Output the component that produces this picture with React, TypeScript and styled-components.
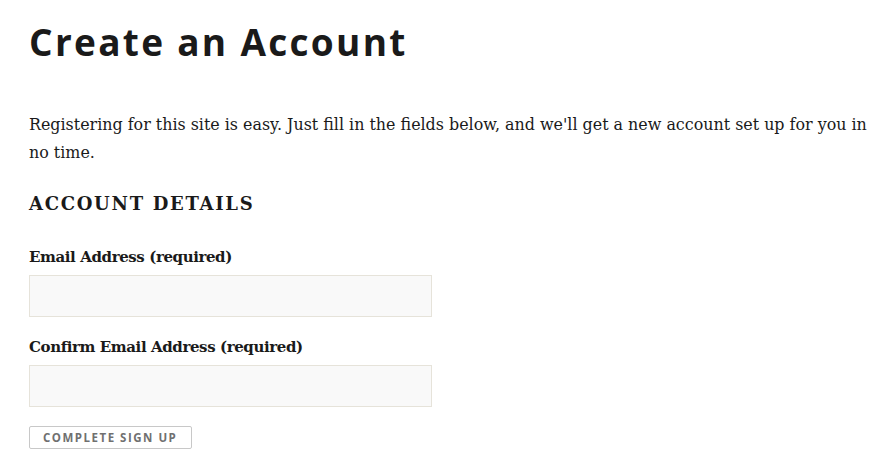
import React from 'react';
import styled, {createGlobalStyle} from 'styled-components';

const GlobalStyle = createGlobalStyle`
    body {
        margin: 0;
        background: #fff;
        color: #1a1a1a;
        font-family: "DejaVu Serif", "Liberation Serif", serif;
    }
`;

const Page = styled.main`
    padding: 20px 16px 0 29px;
`;

const Title = styled.h1`
    margin: 0;
    font-family: "Open Sans", "Liberation Sans", sans-serif;
    font-weight: 700;
    font-size: 37px;
    line-height: 44px;
    letter-spacing: 2.3px;
    color: #1a1a1a;
`;

const Intro = styled.p`
    margin: 47px 0 0;
    font-size: 15.9px;
    line-height: 28px;
    color: #1a1a1a;
`;

const SectionTitle = styled.h2`
    margin: 24px 0 0;
    font-size: 18px;
    line-height: 26px;
    font-weight: 700;
    letter-spacing: 1.7px;
    text-transform: uppercase;
`;

const Field = styled.div`
    display: flex;
    flex-direction: column;
    margin-top: 28px;

    & + & {
        margin-top: 18px;
    }
`;

const Label = styled.label`
    font-size: 15px;
    line-height: 24px;
    font-weight: 700;
    letter-spacing: -0.4px;
    margin-bottom: 6px;
`;

const Input = styled.input`
    box-sizing: border-box;
    width: 403px;
    height: 42px;
    margin: 0;
    border: 1px solid #e6e3da;
    border-radius: 0;
    background: #f9f9f9;
    outline: none;
`;

const SubmitButton = styled.button`
    display: block;
    box-sizing: border-box;
    margin-top: 19px;
    height: 23px;
    padding: 0 14px 0 13px;
    border: 1px solid #c8c8c8;
    border-radius: 2px;
    background: #fff;
    color: #707070;
    font-family: "Open Sans", "Liberation Sans", sans-serif;
    font-weight: 700;
    font-size: 11.5px;
    letter-spacing: 1.5px;
    text-transform: uppercase;
`;

export default function App() {
    return <>
        <GlobalStyle/>
        <Page>
            <Title>Create an Account</Title>
            <Intro>
                Registering for this site is easy. Just fill in the fields below, and we'll get a new account set up for you in no time.
            </Intro>
            <SectionTitle>Account Details</SectionTitle>
            <Field>
                <Label htmlFor="signup_email">Email Address (required)</Label>
                <Input id="signup_email" type="email"/>
            </Field>
            <Field>
                <Label htmlFor="signup_email_confirm">Confirm Email Address (required)</Label>
                <Input id="signup_email_confirm" type="email"/>
            </Field>
            <SubmitButton type="submit">Complete Sign Up</SubmitButton>
        </Page>
    </>;
}
